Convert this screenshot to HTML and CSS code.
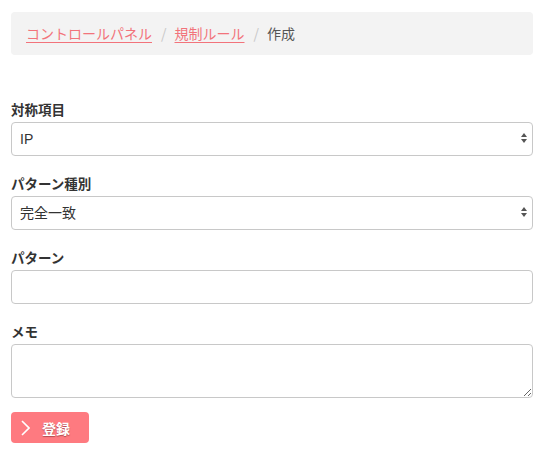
FILE: index.html
```html
<!DOCTYPE html>
<html lang="ja">
<head>
<meta charset="utf-8">
<title>作成</title>
<link rel="stylesheet" href="styles.css">
</head>
<body>
<div class="page">
  <nav class="crumbs">
    <a href="#" class="crumb-link">コントロールパネル</a><span class="sep">/</span><a href="#" class="crumb-link">規制ルール</a><span class="sep">/</span><span class="crumb-current">作成</span>
  </nav>
  <form class="form">
    <div class="group">
      <label class="label">対称項目</label>
      <div class="select-wrap">
        <select class="control select"><option>IP</option></select>
      </div>
    </div>
    <div class="group">
      <label class="label">パターン種別</label>
      <div class="select-wrap">
        <select class="control select"><option>完全一致</option></select>
      </div>
    </div>
    <div class="group">
      <label class="label">パターン</label>
      <input class="control" type="text">
    </div>
    <div class="group group-memo">
      <label class="label">メモ</label>
      <textarea class="control textarea"></textarea>
    </div>
    <button type="button" class="btn">
      <svg class="chev" width="9" height="16" viewBox="0 0 9 16"><path d="M1 1 L8 8 L1 15" fill="none" stroke="#fff" stroke-width="1.6" stroke-linejoin="miter"/></svg>
      <span class="btn-text">登録</span>
    </button>
  </form>
</div>
</body>
</html>
```
FILE: styles.css
```css
* { box-sizing: border-box; }
html, body { margin: 0; padding: 0; background: #fff; }
body {
  font-family: "Noto Sans CJK JP", "Liberation Sans", sans-serif;
  color: #333;
  font-size: 14px;
}
.page {
  padding: 12px 8px 0 11px;
}
.crumbs {
  background: #f3f3f3;
  border-radius: 4px;
  padding: 12px 15px;
  line-height: 19px;
  font-size: 14px;
  height: 43px;
}
.crumb-link {
  color: #f2737b;
  text-decoration: underline;
  text-underline-offset: 3px;
}
.sep {
  color: #c8c8c8;
  margin: 0 8px 0 9px;
}
.crumb-current { color: #555; }
.form {
  margin-top: 45px;
  display: flex;
  flex-direction: column;
}
.group {
  display: flex;
  flex-direction: column;
  margin-bottom: 18px;
}
.group-memo { margin-bottom: 14px; }
.label {
  font-weight: bold;
  font-size: 13.5px;
  line-height: 18px;
  height: 18px;
  margin-bottom: 4px;
  color: #333;
}
.control {
  display: block;
  width: 100%;
  height: 34px;
  border: 1px solid #c8c8c8;
  border-radius: 4px;
  background: #fff;
  font-family: "Liberation Sans", "Noto Sans CJK JP", sans-serif;
  font-size: 14px;
  color: #333;
  padding: 0 8px;
  outline: none;
  margin: 0;
}
.select-wrap { position: relative; height: 34px; }
.select {
  -webkit-appearance: none;
  appearance: none;
  line-height: 32px;
}
.select-wrap::before,
.select-wrap::after {
  content: "";
  position: absolute;
  right: 6px;
  width: 0;
  height: 0;
  border-left: 3px solid transparent;
  border-right: 3px solid transparent;
  pointer-events: none;
}
.select-wrap::before {
  top: 11px;
  border-bottom: 4px solid #555;
}
.select-wrap::after {
  top: 17px;
  border-top: 4px solid #555;
}
.textarea {
  height: 54px;
  resize: both;
  padding: 6px 8px;
}
.btn {
  align-self: flex-start;
  display: flex;
  align-items: center;
  gap: 12px;
  width: 78px;
  height: 31px;
  padding: 0 0 0 10px;
  background: #fe7a80;
  border: none;
  border-radius: 4px;
  color: #fff;
  font-family: "Noto Sans CJK JP", sans-serif;
  font-weight: bold;
  font-size: 14px;
}
.chev { display: block; }
.btn-text {
  line-height: 16px;
  text-shadow: 0 1px 1px #b04a50;
}
```
